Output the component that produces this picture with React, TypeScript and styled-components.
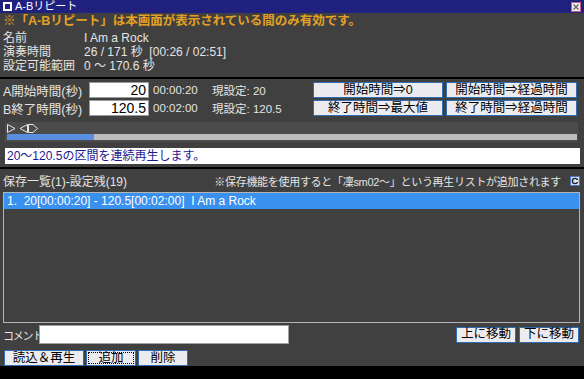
import React from "react";
import styled, { createGlobalStyle } from "styled-components";

const GlobalStyle = createGlobalStyle`
  html, body {
    margin: 0;
    padding: 0;
    background: #000;
  }
  body {
    font-family: "Liberation Sans", "Noto Sans CJK JP", sans-serif;
    font-size: 12px;
    color: #e4e4e4;
  }
`;

const FONT = `"Liberation Sans", "Noto Sans CJK JP", sans-serif`;

const Window = styled.div`
  width: 584px;
  height: 379px;
  display: flex;
  flex-direction: column;
  gap: 2px;
  background: #000;
  overflow: hidden;
`;

const Panel = styled.div<{ h: number }>`
  height: ${(p) => p.h}px;
  background: #404040;
  display: flex;
  flex-direction: column;
  flex-shrink: 0;
`;

const TitleBar = styled.div`
  height: 13px;
  background: #20207e;
  display: flex;
  align-items: center;
  padding: 0 3px;
  gap: 3px;
  color: #fff;
  font-size: 11px;
  line-height: 13px;
`;

const TitleText = styled.span`
  flex: 1;
`;

const Warning = styled.div`
  height: 17px;
  line-height: 17px;
  padding-left: 3px;
  color: #e4a024;
  font-weight: bold;
  font-size: 12.5px;
  font-family: ${FONT};
  white-space: nowrap;
`;

const InfoGrid = styled.div`
  display: grid;
  grid-template-columns: 81px 1fr;
  grid-auto-rows: 14px;
  padding: 1px 3px 0;
  line-height: 14px;
`;

const InfoCell = styled.span`
  white-space: nowrap;
`;

const Controls = styled.div`
  display: flex;
  flex-direction: column;
  gap: 2px;
  padding: 3px 0 0 3px;
`;

const ControlRow = styled.div`
  display: flex;
  align-items: center;
  height: 16px;
`;

const FieldLabel = styled.span`
  width: 86px;
  flex-shrink: 0;
  font-size: 12.5px;
  white-space: nowrap;
`;

const NumInput = styled.div`
  width: 60px;
  height: 16px;
  box-sizing: border-box;
  background: #fff;
  border: 1px solid #9a9a9a;
  color: #000;
  text-align: right;
  font-size: 14px;
  line-height: 15px;
  padding-right: 2px;
  flex-shrink: 0;
`;

const TimeText = styled.span`
  width: 59px;
  margin-left: 4px;
  flex-shrink: 0;
  font-size: 11.5px;
`;

const CurrentText = styled.span`
  width: 101px;
  flex-shrink: 0;
  font-size: 11.5px;
  white-space: nowrap;
`;

const Button = styled.button<{ w: number; focused?: boolean }>`
  width: ${(p) => p.w}px;
  height: 16px;
  box-sizing: border-box;
  margin: 0;
  padding: 0;
  background: #ececf0;
  border: 1px solid #2f6cb0;
  color: #000;
  font-family: ${FONT};
  font-size: 12.5px;
  line-height: 13px;
  flex-shrink: 0;
  white-space: nowrap;
  outline: ${(p) => (p.focused ? "1px dotted #000" : "none")};
  outline-offset: -3px;
`;

const ButtonGap = styled.div`
  display: flex;
  gap: 3px;
`;

const SeekBand = styled.div`
  margin: 6px 6px 0 5px;
  height: 20px;
  background: #4b4b4b;
  display: flex;
  flex-direction: column;
  padding: 2px 0 0 2px;
  box-sizing: border-box;
  gap: 1px;
`;

const SeekTrack = styled.div`
  height: 6px;
  margin-right: 1px;
  background: #bdbdbd;
  display: flex;
`;

const SeekFill = styled.div`
  background: #5a8ee0;
`;

const Status = styled.div`
  margin: 6px 4px 0 5px;
  height: 16px;
  background: #fff;
  color: #1a1a90;
  padding-left: 2px;
  line-height: 16px;
  font-size: 12px;
  white-space: nowrap;
`;

const ListHeader = styled.div`
  height: 23px;
  display: flex;
  align-items: center;
  padding: 0 4px 0 3px;
  font-size: 12px;
  white-space: nowrap;
`;

const HeaderTitle = styled.span`
  flex: 1;
`;

const HeaderNote = styled.span`
  font-size: 11px;
  margin-right: 9px;
  letter-spacing: -0.3px;
`;

const ListBox = styled.div`
  margin: 0 4px 0 3px;
  height: 131px;
  box-sizing: border-box;
  border: 1px solid #b4b4b4;
  background: #404040;
`;

const ListItem = styled.div<{ selected?: boolean }>`
  height: 16px;
  line-height: 16px;
  padding-left: 3px;
  background: ${(p) => (p.selected ? "#3990ee" : "transparent")};
  color: #fff;
  white-space: pre;
  font-size: 12px;
`;

const CommentRow = styled.div`
  display: flex;
  align-items: center;
  margin-top: 2px;
  padding: 0 5px 0 3px;
  height: 19px;
`;

const CommentLabel = styled.span`
  width: 36px;
  flex-shrink: 0;
  font-size: 11px;
  letter-spacing: -1.2px;
  white-space: nowrap;
`;

const CommentInput = styled.div`
  width: 250px;
  height: 19px;
  box-sizing: border-box;
  background: #fff;
  border: 1px solid #a0a0a0;
`;

const Spacer = styled.div`
  flex: 1;
`;

const BottomRow = styled.div`
  display: flex;
  gap: 2px;
  margin-top: 6px;
  padding-left: 4px;
`;

const TitleIcon = () => (
  <svg width="9" height="9" viewBox="0 0 9 9">
    <rect x="1" y="1" width="7" height="7" fill="#20207e" stroke="#fff" strokeWidth="2" />
  </svg>
);

const CloseIcon = () => (
  <svg width="10" height="10" viewBox="0 0 10 10">
    <rect x="0.5" y="0.5" width="9" height="9" fill="#f4f0f2" stroke="#c06078" />
    <path d="M2.5 2.5 L7.5 7.5 M7.5 2.5 L2.5 7.5" stroke="#707070" strokeWidth="1.6" />
  </svg>
);

const SeekIcons = () => (
  <svg width="34" height="9" viewBox="0 0 34 9">
    <polygon points="0.5,0.5 8,4.5 0.5,8.5" fill="none" stroke="#e8e8e8" />
    <polygon points="20.5,0.5 13,4.5 20.5,8.5" fill="none" stroke="#e8e8e8" />
    <path d="M21.5 0.5 L26 0.5 L30.5 4.5 L26 8.5 L21.5 8.5 Z" fill="none" stroke="#e8e8e8" />
  </svg>
);

const ClipIcon = () => (
  <svg width="10" height="10" viewBox="0 0 10 10">
    <rect x="0.5" y="0.5" width="9" height="9" fill="#d8e4f4" stroke="#4a78c0" />
    <circle cx="5" cy="5" r="2.6" fill="none" stroke="#202030" strokeWidth="1.4" />
    <rect x="6" y="4" width="2" height="2" fill="#d8e4f4" />
  </svg>
);

export default function App() {
  const progress = (20 / 171) * 100;
  return (
    <>
      <GlobalStyle />
      <Window>
        <Panel h={77}>
          <TitleBar>
            <TitleIcon />
            <TitleText>A-Bリピート</TitleText>
            <CloseIcon />
          </TitleBar>
          <Warning>※「A-Bリピート」は本画面が表示されている間のみ有効です。</Warning>
          <InfoGrid>
            <InfoCell>名前</InfoCell>
            <InfoCell>I Am a Rock</InfoCell>
            <InfoCell>演奏時間</InfoCell>
            <InfoCell>26 / 171 秒 &nbsp;[00:26 / 02:51]</InfoCell>
            <InfoCell>設定可能範囲</InfoCell>
            <InfoCell>0 ～ 170.6 秒</InfoCell>
          </InfoGrid>
        </Panel>

        <Panel h={88}>
          <Controls>
            <ControlRow>
              <FieldLabel>A開始時間(秒)</FieldLabel>
              <NumInput>20</NumInput>
              <TimeText>00:00:20</TimeText>
              <CurrentText>現設定: 20</CurrentText>
              <ButtonGap>
                <Button w={130}>開始時間⇒0</Button>
                <Button w={131}>開始時間⇒経過時間</Button>
              </ButtonGap>
            </ControlRow>
            <ControlRow>
              <FieldLabel>B終了時間(秒)</FieldLabel>
              <NumInput>120.5</NumInput>
              <TimeText>00:02:00</TimeText>
              <CurrentText>現設定: 120.5</CurrentText>
              <ButtonGap>
                <Button w={130}>終了時間⇒最大値</Button>
                <Button w={131}>終了時間⇒経過時間</Button>
              </ButtonGap>
            </ControlRow>
          </Controls>
          <SeekBand>
            <SeekIcons />
            <SeekTrack>
              <SeekFill style={{ width: `${progress * 1.3}%` }} />
            </SeekTrack>
          </SeekBand>
          <Status>20～120.5の区間を連続再生します。</Status>
        </Panel>

        <Panel h={197}>
          <ListHeader>
            <HeaderTitle>保存一覧(1)-設定残(19)</HeaderTitle>
            <HeaderNote>※保存機能を使用すると「凜sm02～」という再生リストが追加されます</HeaderNote>
            <ClipIcon />
          </ListHeader>
          <ListBox>
            <ListItem selected>{"1.  20[00:00:20] - 120.5[00:02:00]  I Am a Rock"}</ListItem>
          </ListBox>
          <CommentRow>
            <CommentLabel>コメント</CommentLabel>
            <CommentInput />
            <Spacer />
            <ButtonGap>
              <Button w={60}>上に移動</Button>
              <Button w={60}>下に移動</Button>
            </ButtonGap>
          </CommentRow>
          <BottomRow>
            <Button w={80}>読込＆再生</Button>
            <Button w={50} focused>追加</Button>
            <Button w={50}>削除</Button>
          </BottomRow>
        </Panel>
      </Window>
    </>
  );
}
